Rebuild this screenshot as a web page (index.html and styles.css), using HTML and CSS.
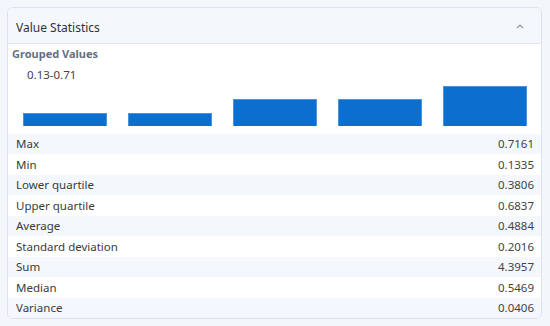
FILE: index.html
```html
<!DOCTYPE html>
<html>
<head>
<meta charset="utf-8">
<link rel="stylesheet" href="styles.css">
</head>
<body>
<div class="card">
  <div class="header">
    <span class="title">Value Statistics</span>
    <svg class="chev" width="8" height="5" viewBox="0 0 8 5"><path d="M1 4.2 L4 1.2 L7 4.2" fill="none" stroke="#8a93a3" stroke-width="1.2"/></svg>
  </div>
  <div class="grouped">
    <div class="gtitle">Grouped Values</div>
    <div class="glabel">0.13-0.71</div>
    <div class="chart">
      <div class="slot"><div class="bar" style="height:13px"></div></div>
      <div class="slot"><div class="bar" style="height:13px"></div></div>
      <div class="slot"><div class="bar" style="height:27px"></div></div>
      <div class="slot"><div class="bar" style="height:27px"></div></div>
      <div class="slot"><div class="bar" style="height:40px"></div></div>
    </div>
  </div>
  <div class="stats">
    <div class="row"><span>Max</span><span>0.7161</span></div>
    <div class="row"><span>Min</span><span>0.1335</span></div>
    <div class="row"><span>Lower quartile</span><span>0.3806</span></div>
    <div class="row"><span>Upper quartile</span><span>0.6837</span></div>
    <div class="row"><span>Average</span><span>0.4884</span></div>
    <div class="row"><span>Standard deviation</span><span>0.2016</span></div>
    <div class="row"><span>Sum</span><span>4.3957</span></div>
    <div class="row"><span>Median</span><span>0.5469</span></div>
    <div class="row"><span>Variance</span><span>0.0406</span></div>
  </div>
</div>
</body>
</html>
```
FILE: styles.css
```css
html, body {
  margin: 0;
  padding: 0;
  background: #f3f6fb;
}
body {
  padding: 7px 8px 0 7px;
  font-family: "Noto Sans", "Open Sans", sans-serif;
  font-size: 11.5px;
  color: #333;
}
.card {
  width: 533px;
  border: 1px solid #dde3ee;
  border-radius: 6px;
  background: #fff;
  overflow: hidden;
}
.header {
  height: 36px;
  box-sizing: border-box;
  padding: 3px 17px 0 8px;
  background: #f4f7fc;
  border-bottom: 1px solid #e1e6f0;
  display: flex;
  align-items: center;
  justify-content: space-between;
}
.title {
  font-size: 12px;
  color: #333;
}
.chev {
  display: block;
  margin-top: -2px;
}
.grouped {
  padding: 2px 4px 0 4px;
}
.gtitle {
  font-size: 11px;
  font-weight: bold;
  color: #67707e;
  line-height: 16px;
}
.glabel {
  line-height: 16px;
  margin-top: 5px;
  padding-left: 15px;
  color: #444;
}
.chart {
  height: 40px;
  margin-top: 3px;
  display: flex;
  align-items: flex-end;
}
.slot {
  flex: 1;
  display: flex;
  justify-content: center;
  align-items: flex-end;
  height: 100%;
}
.bar {
  width: 80%;
  background: #0b6fd0;
  box-sizing: border-box;
  border: 1px solid #4d93db;
  border-bottom: none;
}
.stats {
  margin-top: 7.5px;
}
.row {
  height: 20.5px;
  display: flex;
  justify-content: space-between;
  align-items: center;
  padding: 0 7px 0 8px;
  color: #3a3a3a;
}
.row:nth-child(odd) {
  background: #f4f7fc;
}
.row span:last-child {
  color: #444;
}
```
